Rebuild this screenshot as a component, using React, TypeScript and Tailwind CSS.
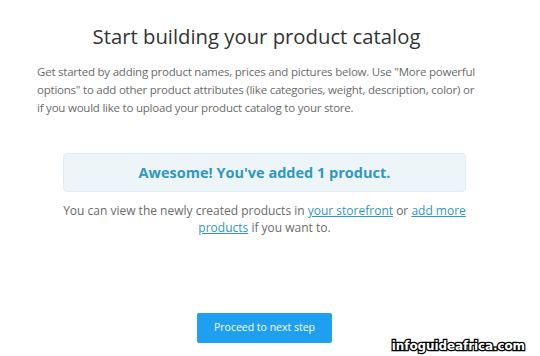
import React from "react";

export default function App() {
  return (
    <div className="relative w-[540px] h-[356px] bg-white overflow-hidden" style={{ fontFamily: '"Open Sans", "Liberation Sans", sans-serif' }}>
      <div className="ml-[37px] w-[455px] flex flex-col">
        <h1 className="mt-[22px] text-center text-[20.3px] leading-[28px] text-[#333333] pr-[16px]">
          Start building your product catalog
        </h1>
        <p className="mt-[13px] w-[443px] text-[11.5px] leading-[18px] tracking-[-0.22px] text-[#6b6b6b]">
          Get started by adding product names, prices and pictures below. Use "More powerful options" to add other product attributes (like categories, weight, description, color) or if you would like to upload your product catalog to your store.
        </p>
        <div className="mt-[36px] mx-[26px] h-[39px] rounded-[4px] border border-[#e2edf3] bg-[#eef5f9] flex items-center justify-center">
          <span className="text-[14.5px] font-bold text-[#2e98c2]">Awesome! You've added 1 product.</span>
        </div>
        <p className="mt-[10px] mx-[24px] text-center text-[12px] leading-[17px] text-[#6b6b6b]">
          You can view the newly created products in{" "}
          <a className="text-[#2e98c2] underline">your storefront</a> or{" "}
          <a className="text-[#2e98c2] underline">add more products</a> if you want to.
        </p>
        <div className="mt-[77px] flex justify-center">
          <button className="w-[135px] h-[30px] rounded-[2px] bg-[#1e9ff0] text-white text-[10.5px]">
            Proceed to next step
          </button>
        </div>
      </div>
      <div
        className="absolute right-[15px] bottom-[3px] text-[12px] leading-[14px] font-black tracking-[-0.1px] text-white [paint-order:stroke_fill] [-webkit-text-stroke:2.5px_#000]"
        style={{ fontFamily: '"DejaVu Sans", sans-serif' }}
      >
        infoguideafrica.com
      </div>
    </div>
  );
}
